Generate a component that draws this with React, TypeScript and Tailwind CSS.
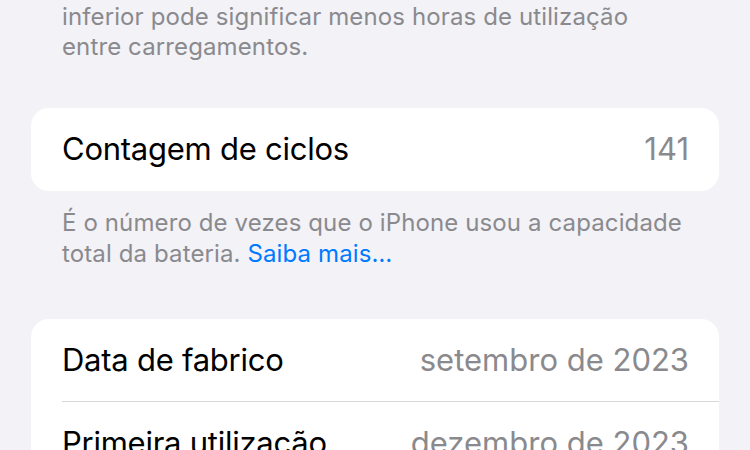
import React from "react";

interface Row {
  label: string;
  value: string;
}

const rows: Row[] = [
  { label: "Data de fabrico", value: "setembro de 2023" },
  { label: "Primeira utilização", value: "dezembro de 2023" },
];

const font = { fontFamily: "Inter, 'Noto Sans', sans-serif" };

const App: React.FC = () => {
  return (
    <div
      className="w-[750px] h-[450px] overflow-hidden bg-[#f2f2f7] px-[31px] pt-[2px]"
      style={font}
    >
      {/* previous section footer */}
      <p className="px-[31px] text-[24px] leading-[30px] tracking-[0.12px] text-[#8a8a8e]">
        inferior pode significar menos horas de utilização
        <br />
        entre carregamentos.
      </p>

      {/* cycle count */}
      <div className="mt-[46px] h-[83px] bg-white rounded-[18px] pl-[31px] pr-[30px] flex items-center justify-between">
        <span className="text-[31px] tracking-[-0.25px] text-black">Contagem de ciclos</span>
        <span className="text-[31px] text-[#8a8a8e]">141</span>
      </div>
      <p className="px-[31px] pt-[16px] text-[24px] leading-[31px] tracking-[0.12px] text-[#8a8a8e]">
        É o número de vezes que o iPhone usou a capacidade
        <br />
        total da bateria. <span className="text-[#007aff]">Saiba mais…</span>
      </p>

      {/* dates */}
      <div className="mt-[50px] bg-white rounded-[18px]">
        {rows.map((row, i) => (
          <div key={row.label} className="pl-[31px]">
            <div
              className={`h-[83px] pr-[30px] flex items-center justify-between ${
                i < rows.length - 1 ? "border-b border-[#d8d8dc]" : ""
              }`}
            >
              <span className="text-[31px] tracking-[-0.25px] text-black">{row.label}</span>
              <span className="text-[31px] text-[#8a8a8e]">{row.value}</span>
            </div>
          </div>
        ))}
      </div>
    </div>
  );
};

export default App;
